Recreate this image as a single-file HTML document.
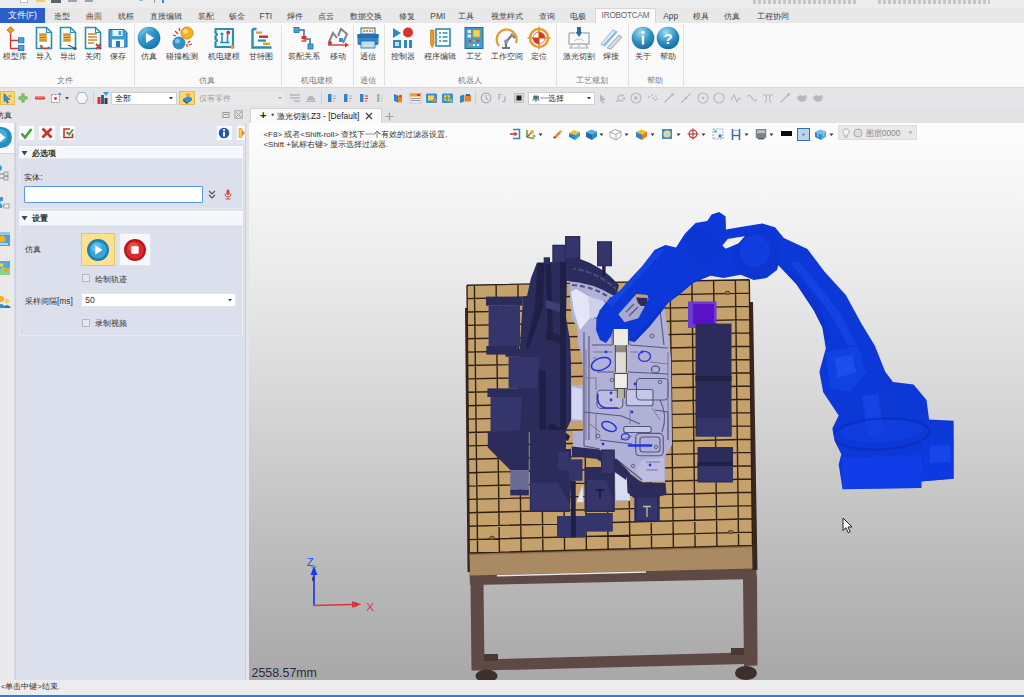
<!DOCTYPE html>
<html>
<head>
<meta charset="utf-8">
<title>IROBOTCAM</title>
<style>
*{box-sizing:border-box;margin:0;padding:0}
html,body{width:1024px;height:697px;overflow:hidden;background:#e5e5e7;font-family:"Liberation Sans",sans-serif;font-size:9px;color:#333}
.abs{position:absolute}
svg{overflow:visible}
#titlebar{left:0;top:0;width:1024px;height:8px;background:#ececec;overflow:hidden}
#tabs{left:0;top:8px;width:1024px;height:15px;background:#e8e8e9}
.tab{position:absolute;top:1px;height:15px;line-height:15px;font-size:8.4px;color:#444;white-space:nowrap;transform:translateX(-50%)}
#filebtn{left:0;top:8px;width:45px;height:14.5px;background:#2b5fc6;color:#fff;font-size:8.6px;line-height:14px;text-align:center;font-style:normal}
#acttab{left:595px;top:7.5px;width:61px;height:16px;background:#fafafa;border:1px solid #d6d6d6;border-bottom:none;font-size:8.2px;line-height:14px;text-align:center;color:#666;letter-spacing:-0.2px}
#ribbon{left:0;top:23px;width:1024px;height:64.5px;background:#fafafa;border-bottom:1px solid #d8d8dc}
.rsep{position:absolute;top:25px;width:1px;height:61px;background:#e0e0e0}
.rlbl{position:absolute;top:50px;height:12px;line-height:12px;font-size:8.4px;color:#3a3a3a;white-space:nowrap;transform:translateX(-50%)}
.glbl{position:absolute;top:74px;height:12px;line-height:12px;font-size:8.4px;color:#7a7a7a;white-space:nowrap;transform:translateX(-50%)}
#toolbar{left:0;top:87.5px;width:1024px;height:20.5px;background:#e5e5e7}
#ptitle{left:-4px;top:108.5px;width:249px;height:15px;font-size:8.4px;line-height:13px;color:#333;white-space:nowrap}
#doctabs{left:249px;top:108px;width:775px;height:15px;background:#e3e3e6}
#viewport{left:248.6px;top:123.4px;width:775.4px;height:556.6px;background:linear-gradient(to bottom,#fdfdfd 0%,#f6f6f6 12%,#e4e4e4 35%,#d2d2d2 55%,#bdbdbd 76%,#a8a8a8 100%);overflow:hidden}
#status{left:0;top:680px;width:1024px;height:15px;background:#ececec;font-size:7.5px;line-height:14px;color:#333;padding-left:1px}
#bluebar{left:0;top:694.7px;width:1024px;height:2.3px;background:#2e7fd2}
</style>
</head>
<body>
<div class="abs" id="titlebar">
<div class="abs" style="left:20.0px;top:0.0px;width:7.5px;height:2.8px;background:#fff;border:1px solid #c4c4c4;border-top:none"></div>
<div class="abs" style="left:35.5px;top:0.0px;width:9.5px;height:2.4px;background:#f0cc62"></div>
<div class="abs" style="left:51.0px;top:0.0px;width:9.5px;height:2.8px;background:#5a6570"></div>
<div class="abs" style="left:68.0px;top:0.0px;width:9.0px;height:2.0px;background:#a0a4aa"></div>
<div class="abs" style="left:85.0px;top:0.0px;width:8.0px;height:2.0px;background:#a0a4aa"></div>
<svg class="abs" style="left:135.5px;top:-3.0px" width="10" height="8" viewBox="0 0 10 8" ><path d="M1,0q4,6 8,0" fill="none" stroke="#3b8fd0" stroke-width="1.4"/></svg>
<div class="abs" style="left:153.5px;top:0.0px;width:1.0px;height:3.0px;background:#999"></div>
<div class="abs" style="left:162.0px;top:0.0px;width:1.5px;height:3.0px;background:#3b8fd0"></div>
<div class="abs" style="left:753.0px;top:0.0px;width:104.0px;height:3.5px;background:repeating-linear-gradient(90deg,#8e8e8e 0 3px,transparent 3px 5px);opacity:.4"></div>
<div class="abs" style="left:878.0px;top:0.0px;width:112.0px;height:3.5px;background:repeating-linear-gradient(90deg,#8e8e8e 0 3px,transparent 3px 5px);opacity:.4"></div>
</div>
<div class="abs" id="tabs">
<span class="tab" style="left:62px">造型</span>
<span class="tab" style="left:94px">曲面</span>
<span class="tab" style="left:125.6px">线框</span>
<span class="tab" style="left:165.6px">直接编辑</span>
<span class="tab" style="left:206px">装配</span>
<span class="tab" style="left:236.9px">钣金</span>
<span class="tab" style="left:265.9px">FTI</span>
<span class="tab" style="left:294.5px">焊件</span>
<span class="tab" style="left:326px">点云</span>
<span class="tab" style="left:365.6px">数据交换</span>
<span class="tab" style="left:406.5px">修复</span>
<span class="tab" style="left:437.8px">PMI</span>
<span class="tab" style="left:466px">工具</span>
<span class="tab" style="left:506.5px">视觉样式</span>
<span class="tab" style="left:547px">查询</span>
<span class="tab" style="left:578.4px">电极</span>
<span class="tab" style="left:670.6px">App</span>
<span class="tab" style="left:701px">模具</span>
<span class="tab" style="left:732px">仿真</span>
<span class="tab" style="left:773px">工程协同</span>
</div>
<div class="abs" id="filebtn">文件(F)</div>
<div class="abs" id="acttab">IROBOTCAM</div>
<div class="abs" id="ribbon"></div>
<svg class="abs" style="left:2.6px;top:26.0px" width="24" height="24" viewBox="0 0 24 24" ><path d="M7.5,7v15.5h8M7.5,14.5h8" stroke="#d9342b" stroke-width="1.3" fill="none"/><rect x="5" y="1.6" width="5" height="5" transform="rotate(45 7.5 4.1)" fill="#e59a2c" stroke="#c77a12" stroke-width="0.8"/><rect x="15.5" y="11.8" width="5.4" height="5" fill="#4aa3d8" stroke="#1f6aa8" stroke-width="0.8"/><rect x="15.5" y="19.6" width="5.4" height="5" fill="#4aa3d8" stroke="#1f6aa8" stroke-width="0.8"/></svg>
<div class="rlbl" style="left:14.6px">模型库</div>
<svg class="abs" style="left:31.5px;top:26.0px" width="24" height="24" viewBox="0 0 24 24" ><path d="M4.5,1.5h10l5,5v16h-15z" fill="#fff" stroke="#2a8fb0" stroke-width="1.6"/><path d="M14.5,1.5v5h5" fill="none" stroke="#2a8fb0" stroke-width="1.2"/><rect x="7" y="7" width="8" height="9" fill="#e9b45a"/><path d="M8,9h6M8,11.5h6M8,14h6" stroke="#b8741a" stroke-width="1"/><path d="M9,21q4,3 9,0" stroke="#d9342b" stroke-width="1.3" fill="none"/><path d="M7.5,19l1.5,3l2,-2.5z" fill="#d9342b"/></svg>
<div class="rlbl" style="left:43.5px">导入</div>
<svg class="abs" style="left:56.4px;top:26.0px" width="24" height="24" viewBox="0 0 24 24" ><path d="M4.5,1.5h10l5,5v16h-15z" fill="#fff" stroke="#2a8fb0" stroke-width="1.6"/><path d="M14.5,1.5v5h5" fill="none" stroke="#2a8fb0" stroke-width="1.2"/><rect x="7" y="7" width="8" height="9" fill="#e9b45a"/><path d="M8,9h6M8,11.5h6M8,14h6" stroke="#b8741a" stroke-width="1"/><path d="M12,19l6,3" stroke="#555" stroke-width="1.3"/><circle cx="19" cy="22.5" r="1.6" fill="#555"/></svg>
<div class="rlbl" style="left:68.4px">导出</div>
<svg class="abs" style="left:81.4px;top:26.0px" width="24" height="24" viewBox="0 0 24 24" ><path d="M4.5,1.5h10l5,5v16h-15z" fill="#fff" stroke="#2a8fb0" stroke-width="1.6"/><path d="M14.5,1.5v5h5" fill="none" stroke="#2a8fb0" stroke-width="1.2"/><path d="M7,8h9M7,11h9M7,14h9M7,17h6" stroke="#d97f2a" stroke-width="1.3"/><path d="M15,18l5,5M20,18l-5,5" stroke="#d9342b" stroke-width="1.8"/></svg>
<div class="rlbl" style="left:93.4px">关闭</div>
<svg class="abs" style="left:106.2px;top:26.0px" width="24" height="24" viewBox="0 0 24 24" ><path d="M3,3.5h15l3,3v14.5h-18z" fill="#3f9ed0" stroke="#1f6aa8" stroke-width="1"/><rect x="6.5" y="4" width="10" height="6" fill="#e8f3fa"/><rect x="12.5" y="5" width="2.6" height="4" fill="#3f9ed0"/><rect x="6" y="13.5" width="12" height="7.5" fill="#f4f9fc"/><rect x="10" y="15" width="4" height="6" fill="#2a78b0"/></svg>
<div class="rlbl" style="left:118.2px">保存</div>
<svg class="abs" style="left:137.4px;top:26.0px" width="24" height="24" viewBox="0 0 24 24" ><defs><radialGradient id="pg" cx="0.35" cy="0.3" r="0.8"><stop offset="0" stop-color="#7fd0ee"/><stop offset="0.6" stop-color="#2390c4"/><stop offset="1" stop-color="#136a9c"/></radialGradient></defs><circle cx="12" cy="12" r="11.3" fill="url(#pg)"/><circle cx="12" cy="12" r="7.5" fill="#1f86bb" opacity="0.5"/><path d="M9,7l8,5l-8,5z" fill="#fff"/></svg>
<div class="rlbl" style="left:149.4px">仿真</div>
<svg class="abs" style="left:170.4px;top:26.0px" width="24" height="24" viewBox="0 0 24 24" ><circle cx="9" cy="17" r="6.5" fill="#2f8fc6"/><circle cx="7.5" cy="15" r="2.5" fill="#8fd0ee" opacity="0.8"/><circle cx="17" cy="7" r="6" fill="#f2b21d" stroke="#e0841a" stroke-width="1"/><circle cx="15.5" cy="5.5" r="2.2" fill="#fbe08a"/><path d="M5,5l3,3M3,9l3,1M9,2l1,3M20,15l-2,2M22,18l-3,1M17,21l0,-3" stroke="#d9342b" stroke-width="1.3"/></svg>
<div class="rlbl" style="left:182.4px">碰撞检测</div>
<svg class="abs" style="left:211.7px;top:26.0px" width="24" height="24" viewBox="0 0 24 24" ><path d="M3.5,3h17.5v18h-17.5v-5q3,-1.5 0,-3v-3q3,-1.5 0,-3z" fill="#f4fafc" stroke="#2a8fb0" stroke-width="2.2" stroke-linejoin="round"/><path d="M10,9.5v6.5M15.5,8v8.5M8,16.5h9.5" fill="none" stroke="#2a8fb0" stroke-width="1.5"/><circle cx="10" cy="8" r="1.5" fill="#2a8fb0"/><circle cx="16.2" cy="6.5" r="1.9" fill="#d9342b"/><circle cx="20.5" cy="21" r="2" fill="#e59a2c"/></svg>
<div class="rlbl" style="left:223.7px">机电建模</div>
<svg class="abs" style="left:249.0px;top:26.0px" width="24" height="24" viewBox="0 0 24 24" ><path d="M3.5,3h4M3.5,3v18.5h19" fill="none" stroke="#2a8fb0" stroke-width="2.4"/><rect x="7" y="5.5" width="6" height="2.2" fill="#e59a2c"/><rect x="10" y="9.5" width="9" height="2.4" fill="#b8322b"/><rect x="9" y="13.5" width="8" height="2.2" fill="#2a8fb0"/><rect x="14" y="16.6" width="7" height="2.4" fill="#e59a2c"/></svg>
<div class="rlbl" style="left:261px">甘特图</div>
<svg class="abs" style="left:292.0px;top:26.0px" width="24" height="24" viewBox="0 0 24 24" ><path d="M6,4h6v9h6v6" fill="none" stroke="#3b6d9a" stroke-width="1.5"/><rect x="2" y="1.5" width="5" height="5" fill="#4aa3d8" stroke="#1f6aa8" stroke-width="0.8"/><rect x="16" y="18" width="5" height="5" fill="#4aa3d8" stroke="#1f6aa8" stroke-width="0.8"/><rect x="9.5" y="10" width="5" height="3" fill="#d9342b"/><rect x="9.5" y="14" width="5" height="2" fill="#c77"/></svg>
<div class="rlbl" style="left:304px">装配关系</div>
<svg class="abs" style="left:325.7px;top:26.0px" width="24" height="24" viewBox="0 0 24 24" ><path d="M3,16l4,-9l4,5M12,10l3,-7l6,5l-4,9" fill="none" stroke="#7a8590" stroke-width="2"/><path d="M2,19h18" stroke="#d9342b" stroke-width="1.4"/><path d="M19,16.5l4,2.5l-4,2.5z" fill="#d9342b"/><rect x="13" y="12" width="4" height="4" fill="#3b8fd0"/><circle cx="4" cy="17" r="2" fill="#d9342b"/></svg>
<div class="rlbl" style="left:337.7px">移动</div>
<svg class="abs" style="left:356.3px;top:26.0px" width="24" height="24" viewBox="0 0 24 24" ><rect x="5" y="2" width="14" height="6" fill="#e9f2f8" stroke="#1f6aa8" stroke-width="1"/><path d="M7,5h10" stroke="#e59a2c" stroke-width="2" stroke-dasharray="2 1"/><rect x="1.5" y="8" width="21" height="11" rx="1.5" fill="#2f86c8"/><rect x="1.5" y="8" width="21" height="4" fill="#2a6fa8"/><rect x="5" y="15" width="14" height="7" fill="#bfe0f2" stroke="#1f6aa8" stroke-width="0.8"/></svg>
<div class="rlbl" style="left:368.3px">通信</div>
<svg class="abs" style="left:391.4px;top:26.0px" width="24" height="24" viewBox="0 0 24 24" ><path d="M2,2l8,5l-8,5z" fill="#2f86c8"/><circle cx="17" cy="6.5" r="5" fill="#d9342b"/><rect x="2" y="14" width="8" height="8" fill="#2f86c8"/><rect x="4" y="16" width="4" height="4" fill="#bfe0f2"/><rect x="13" y="14" width="3" height="8" fill="#2f86c8"/><rect x="18" y="14" width="3" height="8" fill="#2f86c8"/></svg>
<div class="rlbl" style="left:403.4px">控制器</div>
<svg class="abs" style="left:428.3px;top:26.0px" width="24" height="24" viewBox="0 0 24 24" ><rect x="8" y="3" width="14" height="17" fill="#fff" stroke="#2a8fb0" stroke-width="1.6"/><path d="M11,7h2M14.5,7h5M11,11h2M14.5,11h5M11,15h2M14.5,15h5" stroke="#2a8fb0" stroke-width="1.6"/><path d="M2.5,4h3.5v14l-1.75,3.5l-1.75,-3.5z" fill="#e59a2c" stroke="#c77a12" stroke-width="0.7"/></svg>
<div class="rlbl" style="left:440.3px">程序编辑</div>
<svg class="abs" style="left:461.8px;top:26.0px" width="24" height="24" viewBox="0 0 24 24" ><rect x="3" y="1.5" width="18" height="21" fill="#3f9ed0" stroke="#1f6aa8" stroke-width="1"/><rect x="11" y="4" width="7" height="7" fill="#f7d24a" stroke="#c79a12" stroke-width="0.6"/><rect x="5.5" y="4" width="3.5" height="3" fill="#d8ecf6"/><rect x="5.5" y="8.5" width="3.5" height="3" fill="#d8ecf6"/><circle cx="8" cy="15" r="1.3" fill="#d9342b"/><circle cx="12" cy="15" r="1.3" fill="#e59a2c"/><circle cx="16" cy="15" r="1.3" fill="#d9342b"/><circle cx="8" cy="19" r="1.3" fill="#e59a2c"/><circle cx="12" cy="19" r="1.3" fill="#d8ecf6"/><circle cx="16" cy="19" r="1.3" fill="#d8ecf6"/></svg>
<div class="rlbl" style="left:473.8px">工艺</div>
<svg class="abs" style="left:494.6px;top:26.0px" width="24" height="24" viewBox="0 0 24 24" ><path d="M4,20a10,10 0 1 1 17,-3" fill="none" stroke="#e59a2c" stroke-width="2.2"/><path d="M7,22h8M11,22v-6l6,-7l3,3" fill="none" stroke="#6d7782" stroke-width="2.2"/><circle cx="11" cy="15.5" r="2" fill="#8c96a0"/><circle cx="17" cy="9" r="1.8" fill="#8c96a0"/></svg>
<div class="rlbl" style="left:506.6px">工作空间</div>
<svg class="abs" style="left:527.4px;top:26.0px" width="24" height="24" viewBox="0 0 24 24" ><circle cx="12" cy="12" r="9" fill="#fff" stroke="#e59a2c" stroke-width="2.4"/><path d="M12,0.5v23M0.5,12h23" stroke="#e59a2c" stroke-width="1.6"/><path d="M12,12v-6a6,6 0 0 1 6,6z" fill="#d9342b"/><path d="M12,12v6a6,6 0 0 1 -6,-6z" fill="#d9342b"/><circle cx="12" cy="12" r="6" fill="none" stroke="#b55" stroke-width="0.8"/></svg>
<div class="rlbl" style="left:539.4px">定位</div>
<svg class="abs" style="left:567.0px;top:26.0px" width="24" height="24" viewBox="0 0 24 24" ><path d="M2,7h6M16,7h6v11h-20v-11" fill="none" stroke="#a8b0b8" stroke-width="1.3"/><path d="M6,18l-3,4h18l-3,-4" fill="none" stroke="#a8b0b8" stroke-width="1.2"/><rect x="10" y="1" width="4" height="5" fill="#2a6fa8"/><path d="M8.5,6h7l-3.5,5z" fill="#2a6fa8"/><path d="M7,15q5,-4 10,0" fill="none" stroke="#b8c4cc" stroke-width="1"/><text x="12" y="21" font-size="4" text-anchor="middle" fill="#9aa" font-family="Liberation Sans">∠</text></svg>
<div class="rlbl" style="left:579px">激光切割</div>
<svg class="abs" style="left:599.0px;top:26.0px" width="24" height="24" viewBox="0 0 24 24" ><path d="M2,18l12,-14l4,2l-12,14z" fill="#e2eef6" stroke="#9ec4de" stroke-width="1.1"/><path d="M8,22l12,-13l3,2l-11,12z" fill="#d0dde6" stroke="#9aa8b4" stroke-width="1"/><path d="M5,19l12,-13" stroke="#6fb2dc" stroke-width="1.2"/></svg>
<div class="rlbl" style="left:611px">焊接</div>
<svg class="abs" style="left:630.5px;top:26.0px" width="24" height="24" viewBox="0 0 24 24" ><defs><radialGradient id="ig" cx="0.4" cy="0.25" r="0.85"><stop offset="0" stop-color="#9fdcf2"/><stop offset="0.55" stop-color="#2a8fc2"/><stop offset="1" stop-color="#14628f"/></radialGradient></defs><circle cx="12" cy="12" r="11.3" fill="url(#ig)"/><rect x="10.8" y="9.5" width="2.4" height="9" fill="#fff"/><circle cx="12" cy="6.3" r="1.6" fill="#fff"/></svg>
<div class="rlbl" style="left:642.5px">关于</div>
<svg class="abs" style="left:656.0px;top:26.0px" width="24" height="24" viewBox="0 0 24 24" ><circle cx="12" cy="12" r="11.3" fill="url(#ig)"/><text x="12" y="17.5" font-size="15" font-weight="bold" text-anchor="middle" fill="#fff" font-family="Liberation Sans">?</text></svg>
<div class="rlbl" style="left:668px">帮助</div>
<div class="glbl" style="left:64.5px">文件</div>
<div class="glbl" style="left:207px">仿真</div>
<div class="glbl" style="left:316.8px">机电建模</div>
<div class="glbl" style="left:368.3px">通信</div>
<div class="glbl" style="left:470px">机器人</div>
<div class="glbl" style="left:591.6px">工艺规划</div>
<div class="glbl" style="left:655px">帮助</div>
<div class="rsep" style="left:134.2px"></div>
<div class="rsep" style="left:281px"></div>
<div class="rsep" style="left:353px"></div>
<div class="rsep" style="left:383.8px"></div>
<div class="rsep" style="left:555.6px"></div>
<div class="rsep" style="left:627.8px"></div>
<div class="rsep" style="left:683px"></div>
<div class="abs" id="toolbar"></div>
<div class="abs" style="left:0.0px;top:91.3px;width:15.2px;height:13.3px;background:#f7d978;border:1px solid #e2bd55"></div>
<svg class="abs" style="left:1.0px;top:92.0px" width="12" height="12" viewBox="0 0 12 12" ><path d="M3,1.5l6,6h-3l1.5,3l-1.5,.8l-1.5,-3l-1.5,1.5z" fill="#3b8fd0" stroke="#1f5f98" stroke-width="0.5"/><circle cx="9" cy="4" r="1.6" fill="#f2a21d"/></svg>
<svg class="abs" style="left:17.4px;top:92.0px" width="12" height="12" viewBox="0 0 12 12" ><path d="M6,1.5v9M1.5,6h9" stroke="#5aa83c" stroke-width="3"/><path d="M6,1.5v9M1.5,6h9" stroke="#9bd47a" stroke-width="1"/></svg>
<svg class="abs" style="left:34.0px;top:92.0px" width="12" height="12" viewBox="0 0 12 12" ><rect x="1" y="4.5" width="10" height="3" rx="1" fill="#d9342b"/><rect x="2" y="5.2" width="8" height="1" fill="#f08a80"/></svg>
<svg class="abs" style="left:50.3px;top:92.0px" width="12" height="12" viewBox="0 0 12 12" ><rect x="1.5" y="2.5" width="8" height="8" fill="#fff" stroke="#8a929a" stroke-width="1" stroke-dasharray="2 1"/><circle cx="5.5" cy="6.5" r="1.4" fill="#d9342b"/><path d="M9,1l2,2" stroke="#3b8fd0" stroke-width="1.4"/></svg>
<svg class="abs" style="left:64.4px;top:95.0px" width="6" height="6" viewBox="0 0 6 6" ><path d="M1,2h4l-2,2.5z" fill="#444"/></svg>
<svg class="abs" style="left:74.5px;top:91.0px" width="14" height="14" viewBox="0 0 14 14" ><path d="M4,1.5h6l3,5.5l-3,5.5h-6l-3,-5.5z" fill="#f4f7fa" stroke="#9db4c8" stroke-width="1"/></svg>
<div class="abs" style="left:93.0px;top:91.0px;width:1.0px;height:14.0px;background:#cfcfcf"></div>
<svg class="abs" style="left:95.5px;top:91.0px" width="14" height="14" viewBox="0 0 14 14" ><rect x="1.5" y="6" width="3" height="7" fill="#d9342b"/><rect x="5" y="4" width="3" height="9" fill="#2a5fa8"/><rect x="8.5" y="7" width="3" height="6" fill="#3a3a3a"/><path d="M7,1h6l-3,4z" fill="#2f9fd8"/></svg>
<div class="abs" style="left:111.3px;top:92.0px;width:65.4px;height:12.6px;background:#fff;border:1px solid #d0d0d0;font-size:8.4px;line-height:11px;padding-left:3px;color:#222">全部</div>
<svg class="abs" style="left:168.0px;top:95.0px" width="6" height="6" viewBox="0 0 6 6" ><path d="M1,2h4l-2,2.5z" fill="#333"/></svg>
<div class="abs" style="left:178.7px;top:91.3px;width:16.1px;height:13.3px;background:#f7d978;border:1px solid #e2bd55"></div>
<svg class="abs" style="left:180.7px;top:92.0px" width="12" height="12" viewBox="0 0 12 12" ><path d="M2,7l5,-3l4,2l-5,4z" fill="#3b8fd0"/><path d="M2,7v2l4,3v-2z" fill="#1f5f98"/><path d="M6,10v2l5,-4v-2z" fill="#2a78b8"/><path d="M4,3l3,-2l3,1.5l-3,2z" fill="#f2a21d"/></svg>
<div class="abs" style="left:195.7px;top:92.0px;width:88.5px;height:12.6px;background:#e9e9e9;font-size:8.4px;line-height:12px;padding-left:3px;color:#9a9a9a">仅有零件</div>
<svg class="abs" style="left:277.4px;top:95.0px" width="6" height="6" viewBox="0 0 6 6" ><path d="M1,2h4l-2,2.5z" fill="#aaa"/></svg>
<svg class="abs" style="left:289.3px;top:92.0px" width="12" height="12" viewBox="0 0 12 12" ><path d="M1,3h10M1,6h10M5,9h6" stroke="#b4b8bc" stroke-width="1.3"/></svg>
<svg class="abs" style="left:305.4px;top:92.0px" width="12" height="12" viewBox="0 0 12 12" ><path d="M2,8q4,-8 8,0zM1,9.5h10" fill="#b4b8bc" stroke="#b4b8bc" stroke-width="1"/></svg>
<div class="abs" style="left:321.3px;top:91.0px;width:1.0px;height:14.0px;background:#cfcfcf"></div>
<svg class="abs" style="left:325.9px;top:92.0px" width="12" height="12" viewBox="0 0 12 12" ><rect x="2" y="2" width="3.5" height="8" fill="#2f86c8"/><path d="M7,4h3M7,6.5h3M7,9h2" stroke="#a9b0b8" stroke-width="1.1"/></svg>
<svg class="abs" style="left:342.0px;top:92.0px" width="12" height="12" viewBox="0 0 12 12" ><rect x="2" y="2" width="3.5" height="8" fill="#2f86c8"/><path d="M7,4h3M7,6.5h3M7,9h2" stroke="#a9b0b8" stroke-width="1.1"/></svg>
<svg class="abs" style="left:357.5px;top:92.0px" width="12" height="12" viewBox="0 0 12 12" ><rect x="2" y="2" width="3.5" height="8" fill="#2f86c8"/><path d="M7,4h3M7,6.5h3M7,9h2" stroke="#d9342b" stroke-width="1.1"/></svg>
<svg class="abs" style="left:374.2px;top:92.0px" width="12" height="12" viewBox="0 0 12 12" ><rect x="3" y="2" width="2.5" height="8" fill="#a9b0b8"/><path d="M7,4h2M7,6.5h2M7,9h2" stroke="#b9bec4" stroke-width="1.1"/></svg>
<svg class="abs" style="left:391.8px;top:92.0px" width="12" height="12" viewBox="0 0 12 12" ><path d="M2,2l4,1.5v7l-4,-1.5z" fill="#2f86c8"/><path d="M6,3.5l4,1v6l-4,0z" fill="#e5822c"/><circle cx="8.5" cy="4" r="1.3" fill="#d9342b"/></svg>
<svg class="abs" style="left:408.9px;top:92.0px" width="13" height="12" viewBox="0 0 13 12" ><rect x="1" y="1.5" width="11" height="9.5" fill="#f3f3f3" stroke="#aab" stroke-width="0.6"/><rect x="1" y="1.5" width="11" height="3" fill="#e5a23c"/><path d="M2,6.5h9M2,8.5h9" stroke="#888" stroke-width="0.9"/><rect x="8" y="2" width="3" height="2" fill="#d9342b"/></svg>
<svg class="abs" style="left:425.0px;top:92.0px" width="13" height="12" viewBox="0 0 13 12" ><rect x="1" y="1.5" width="11" height="9.5" rx="1" fill="#3b8fd0"/><rect x="3" y="3.5" width="6" height="5" fill="#f7d24a"/><circle cx="9.5" cy="8.5" r="2" fill="#e5822c"/></svg>
<svg class="abs" style="left:441.1px;top:92.0px" width="13" height="12" viewBox="0 0 13 12" ><rect x="1" y="1.5" width="11" height="9.5" rx="1" fill="#3b8fd0"/><circle cx="6" cy="6" r="3.2" fill="#f7d24a"/><path d="M6,3v6M3,6h6" stroke="#3a9a4a" stroke-width="1.2"/><rect x="8" y="7" width="3.5" height="3.5" fill="#7cc46a"/></svg>
<svg class="abs" style="left:458.7px;top:92.0px" width="13" height="12" viewBox="0 0 13 12" ><path d="M1,4l4,-1.5v7l-4,1.5z" fill="#2f86c8"/><rect x="5.5" y="3" width="6.5" height="6.5" fill="#e5822c"/><rect x="7" y="2" width="4" height="2" fill="#3b6fa8"/></svg>
<div class="abs" style="left:475.0px;top:91.0px;width:1.0px;height:14.0px;background:#cfcfcf"></div>
<svg class="abs" style="left:480.3px;top:92.0px" width="12" height="12" viewBox="0 0 12 12" ><circle cx="6" cy="6" r="4.8" fill="none" stroke="#a9adb3" stroke-width="1.2"/><path d="M6,3v3.2l2,1.5" fill="none" stroke="#a9adb3" stroke-width="1.1"/></svg>
<svg class="abs" style="left:495.8px;top:92.0px" width="12" height="12" viewBox="0 0 12 12" ><path d="M3,2.5h2.5M3,2.5v5M9,4.5v5M9,9.5h-2.5" fill="none" stroke="#a9adb3" stroke-width="1.2"/></svg>
<svg class="abs" style="left:512.5px;top:92.0px" width="12" height="12" viewBox="0 0 12 12" ><rect x="1.5" y="1.5" width="9" height="9" fill="#dadada" stroke="#b8b8b8" stroke-width="0.8"/><rect x="3.5" y="3.5" width="5" height="5" fill="#222"/></svg>
<div class="abs" style="left:528.2px;top:92.0px;width:66.6px;height:12.6px;background:#fff;border:1px solid #d0d0d0;font-size:8.4px;line-height:11px;padding-left:3px;color:#222">单一选择</div>
<svg class="abs" style="left:585.8px;top:95.0px" width="6" height="6" viewBox="0 0 6 6" ><path d="M1,2h4l-2,2.5z" fill="#333"/></svg>
<svg class="abs" style="left:596.0px;top:92.0px" width="12" height="12" viewBox="0 0 12 12" ><path d="M4,2l6,6h-3l1.5,3l-1.5,.8l-1.5,-3l-1.5,1.5z" fill="#b6babf"/></svg>
<svg class="abs" style="left:613.6px;top:92.0px" width="12" height="12" viewBox="0 0 12 12" ><circle cx="7" cy="6" r="3" fill="none" stroke="#b6babf" stroke-width="2" stroke-dasharray="1.5 1"/><path d="M2,10l3,-2" stroke="#b6babf" stroke-width="1.5"/></svg>
<svg class="abs" style="left:630.3px;top:92.0px" width="12" height="12" viewBox="0 0 12 12" ><circle cx="6" cy="6" r="5" fill="none" stroke="#b6babf" stroke-width="1.2"/><path d="M4.5,3.5l4,2.5l-4,2.5z" fill="#b6babf"/></svg>
<svg class="abs" style="left:646.7px;top:92.0px" width="12" height="12" viewBox="0 0 12 12" ><circle cx="2" cy="5" r="0.9" fill="#b6babf"/><circle cx="5" cy="3" r="0.9" fill="#b6babf"/><circle cx="6" cy="6" r="0.9" fill="#b6babf"/><circle cx="9" cy="4" r="0.9" fill="#b6babf"/><circle cx="8" cy="8" r="0.9" fill="#b6babf"/><circle cx="10" cy="7" r="0.9" fill="#b6babf"/></svg>
<svg class="abs" style="left:663.4px;top:92.0px" width="12" height="12" viewBox="0 0 12 12" ><path d="M1.5,10.5l9,-9" stroke="#b6babf" stroke-width="1.2"/><circle cx="9.5" cy="2.5" r="1.2" fill="#b6babf"/></svg>
<svg class="abs" style="left:680.0px;top:92.0px" width="12" height="12" viewBox="0 0 12 12" ><path d="M1.5,10.5l9,-9" stroke="#b6babf" stroke-width="1.2"/><circle cx="6" cy="6" r="1.2" fill="#b6babf"/></svg>
<svg class="abs" style="left:696.5px;top:92.0px" width="12" height="12" viewBox="0 0 12 12" ><circle cx="6" cy="6" r="5" fill="none" stroke="#b6babf" stroke-width="1.1"/><circle cx="6" cy="6" r="1.2" fill="#b6babf"/></svg>
<svg class="abs" style="left:713.2px;top:92.0px" width="12" height="12" viewBox="0 0 12 12" ><circle cx="6" cy="6" r="5" fill="none" stroke="#b6babf" stroke-width="1.2"/></svg>
<svg class="abs" style="left:729.9px;top:92.0px" width="12" height="12" viewBox="0 0 12 12" ><path d="M1,8l3,-5l3,7l2,-4l2,1" fill="none" stroke="#b6babf" stroke-width="1.1"/></svg>
<svg class="abs" style="left:746.3px;top:92.0px" width="12" height="12" viewBox="0 0 12 12" ><path d="M1,5q2.5,-4 5,1t5,1" fill="none" stroke="#b6babf" stroke-width="1.2"/></svg>
<svg class="abs" style="left:762.4px;top:92.0px" width="12" height="12" viewBox="0 0 12 12" ><path d="M1,3h10M3,4q3,0 0,7M9,4q-3,0 0,7" fill="none" stroke="#b6babf" stroke-width="1.1"/></svg>
<svg class="abs" style="left:779.1px;top:92.0px" width="12" height="12" viewBox="0 0 12 12" ><path d="M1.5,10.5l9,-9" stroke="#b6babf" stroke-width="1.2"/><circle cx="9.5" cy="2.5" r="1.2" fill="#b6babf"/></svg>
<svg class="abs" style="left:795.8px;top:92.0px" width="12" height="12" viewBox="0 0 12 12" ><path d="M1,5l3,-2l3,1l3,-1l1,3l-2,3l-4,1l-3,-2z" fill="#b6babf"/></svg>
<svg class="abs" style="left:812.2px;top:92.0px" width="12" height="12" viewBox="0 0 12 12" ><path d="M1,5l3,-2l3,1l3,-1l1,3l-2,3l-4,1l-3,-2z" fill="#b6babf"/></svg>
<div class="abs" id="ptitle">仿真</div>
<div class="abs" id="doctabs"></div>
<div class="abs" style="left:250.0px;top:108.0px;width:131.7px;height:15.5px;background:#fafafa;border:1px solid #d4d4d8;border-bottom:none;font-size:8.4px;line-height:14px;color:#222;white-space:nowrap;padding-left:9px"><b style="font-size:11px;line-height:12px">+</b>&nbsp; * 激光切割.Z3 - [Default]</div>
<svg class="abs" style="left:364.5px;top:112.0px" width="8" height="8" viewBox="0 0 8 8" ><path d="M1,1l6,6M7,1l-6,6" stroke="#444" stroke-width="1.3"/></svg>
<svg class="abs" style="left:385.1px;top:111.5px" width="9" height="9" viewBox="0 0 9 9" ><path d="M4.5,0.5v8M0.5,4.5h8" stroke="#a0a0a0" stroke-width="1.2"/></svg>
<svg class="abs" style="left:221.6px;top:110.5px" width="8" height="8" viewBox="0 0 8 8" ><rect x="1" y="1.5" width="6" height="5" fill="none" stroke="#9a9a9a" stroke-width="1"/><path d="M2,3.5h4" stroke="#9a9a9a" stroke-width="1"/></svg>
<svg class="abs" style="left:234.3px;top:110.0px" width="9" height="9" viewBox="0 0 9 9" ><rect x="0.8" y="0.8" width="7.4" height="7.4" fill="none" stroke="#9a9a9a" stroke-width="0.9"/><path d="M2,2l5,5M7,2l-5,5" stroke="#9a9a9a" stroke-width="1"/></svg>
<div class="abs" style="left:0.0px;top:123.0px;width:15.0px;height:557.5px;background:#e9e9eb;border-right:1px solid #d9dbe4;overflow:hidden"><div class="abs" style="left:0;top:0;width:15px;height:31px;background:#fbfbfd;border-bottom:1px solid #d5d8e2"></div></div>
<svg class="abs" style="left:0;top:126px" width="14" height="24" viewBox="0 0 14 24"><circle cx="1.5" cy="11.5" r="10.5" fill="#2390c4"/><circle cx="0.5" cy="10" r="7" fill="#55b6e0" opacity="0.7"/><path d="M0,7l5.5,4.5l-5.5,4.5z" fill="#fff"/></svg>
<svg class="abs" style="left:-3.0px;top:164.7px" width="14" height="16" viewBox="0 0 14 16" ><circle cx="2" cy="3" r="3" fill="#3b9ad8"/><path d="M2,6v7h5M2,9h5" fill="none" stroke="#7a8590" stroke-width="1"/><rect x="7" y="7" width="4" height="3.5" fill="#dfe6ee" stroke="#7a8590" stroke-width="0.7"/><rect x="7" y="11.5" width="4" height="3.5" fill="#dfe6ee" stroke="#7a8590" stroke-width="0.7"/></svg>
<svg class="abs" style="left:-3.0px;top:196.0px" width="14" height="14" viewBox="0 0 14 14" ><rect x="0" y="1" width="6" height="4" fill="#3b9ad8"/><rect x="0" y="8" width="5" height="4" fill="#3b9ad8"/><rect x="7" y="8" width="5" height="4" fill="#eef3f8" stroke="#7a8590" stroke-width="0.7"/><path d="M3,5v3M5,10h2" stroke="#7a8590" stroke-width="0.9"/></svg>
<svg class="abs" style="left:-2.0px;top:230.5px" width="14" height="16" viewBox="0 0 14 16" ><rect x="0" y="1" width="12" height="14" fill="#4aa3d8"/><rect x="0" y="1" width="12" height="3" fill="#8fc8ea"/><circle cx="4" cy="8" r="3.5" fill="#f2b21d"/><path d="M1,13h9" stroke="#e8f3fa" stroke-width="1.2"/></svg>
<svg class="abs" style="left:-2.0px;top:260.0px" width="14" height="16" viewBox="0 0 14 16" ><rect x="0" y="1" width="12" height="14" fill="#55a8dc"/><path d="M0,12l5,-6l4,4l3,-3v8h-12z" fill="#8fd08a"/><circle cx="3.5" cy="5" r="1.8" fill="#f7d24a"/><circle cx="8" cy="10" r="2.2" fill="#f2a21d"/></svg>
<svg class="abs" style="left:-2.0px;top:294.5px" width="14" height="14" viewBox="0 0 14 14" ><circle cx="3" cy="4" r="3" fill="#f2b21d"/><path d="M-2,13q5,-8 10,0z" fill="#3b8fd0"/><circle cx="9" cy="6" r="2.3" fill="#f7d24a"/><path d="M5,13q4,-6 8,0z" fill="#2f76b8"/></svg>
<div class="abs" style="left:15.0px;top:123.0px;width:231.0px;height:557.5px;background:#dcdfec;border:1px solid #cdd1de;border-top:none"></div>
<div class="abs" style="left:16.0px;top:123.0px;width:229.0px;height:21.0px;background:#e3e5ee"></div>
<div class="abs" style="left:17.7px;top:125.2px;width:17.3px;height:15.6px;background:#fafbfd;border:1px solid #e3e5ec"></div>
<svg class="abs" style="left:19.8px;top:127.0px" width="13" height="12" viewBox="0 0 13 12" ><path d="M1.5,6.5l3.5,4l6.5,-8.5" fill="none" stroke="#3fa33a" stroke-width="2.6"/></svg>
<div class="abs" style="left:38.2px;top:125.2px;width:17.4px;height:15.6px;background:#fafbfd;border:1px solid #e3e5ec"></div>
<svg class="abs" style="left:40.9px;top:127.0px" width="12" height="12" viewBox="0 0 12 12" ><path d="M1.5,1.5l9,9M10.5,1.5l-9,9" stroke="#cf2f2a" stroke-width="2.8"/></svg>
<div class="abs" style="left:59.3px;top:125.2px;width:17.2px;height:15.6px;background:#fafbfd;border:1px solid #e3e5ec"></div>
<svg class="abs" style="left:61.9px;top:127.0px" width="12" height="12" viewBox="0 0 12 12" ><path d="M8,2h-6v8.5h8.5v-4" fill="none" stroke="#cf2f2a" stroke-width="1.6"/><path d="M4.5,5l2.5,2.5l4,-5" fill="none" stroke="#3fa33a" stroke-width="2"/></svg>
<div class="abs" style="left:215.7px;top:125.2px;width:17.5px;height:15.6px;background:#fafbfd;border:1px solid #e3e5ec"></div>
<svg class="abs" style="left:218.4px;top:127.0px" width="12" height="12" viewBox="0 0 12 12" ><circle cx="6" cy="6" r="5.3" fill="#2456b8"/><rect x="5" y="5" width="2" height="4.5" fill="#fff"/><circle cx="6" cy="3.2" r="1.1" fill="#fff"/></svg>
<div class="abs" style="left:235.8px;top:125.2px;width:9.2px;height:15.6px;background:#fafbfd;border:1px solid #e3e5ec;border-right:none"></div>
<svg class="abs" style="left:238.0px;top:127.0px" width="7" height="12" viewBox="0 0 7 12" ><path d="M1,1.5h3v9h-3z" fill="#f7d24a" stroke="#c79a12" stroke-width="0.6"/><path d="M4,3l3,3l-3,3z" fill="#e5822c"/></svg>
<div class="abs" style="left:18.7px;top:145.7px;width:224.3px;height:13.6px;background:#f6f7fb;border-top:1px solid #fff;border-bottom:1px solid #e6e8f0;font-size:8.4px;font-weight:bold;line-height:13px;color:#333;padding-left:13px">必选项</div>
<svg class="abs" style="left:20.8px;top:149.5px" width="7" height="6" viewBox="0 0 7 6" ><path d="M0.5,1h6l-3,4.5z" fill="#444"/></svg>
<div class="abs" style="left:18.7px;top:159.3px;width:224.3px;height:49.7px;border:1px solid #e9ebf3;border-top:none"></div>
<div class="abs" style="left:24.3px;top:171.0px;width:35.7px;height:12.0px;font-size:8.4px;line-height:12px;color:#333">实体:</div>
<div class="abs" style="left:23.9px;top:185.8px;width:179.5px;height:16.8px;background:#fff;border:1.4px solid #5b9bdc;border-radius:1px"></div>
<svg class="abs" style="left:207.6px;top:189.8px" width="8" height="9" viewBox="0 0 8 9" ><path d="M1,1l3,3l3,-3M1,5l3,3l3,-3" fill="none" stroke="#555" stroke-width="1.2"/></svg>
<svg class="abs" style="left:223.6px;top:188.8px" width="8" height="11" viewBox="0 0 8 11" ><rect x="2.5" y="0.5" width="3" height="5.5" rx="1.5" fill="#d9453b"/><path d="M1,4.5q0,3.5 3,3.5t3,-3.5M4,8v1.5M1.5,10h5" fill="none" stroke="#c4423a" stroke-width="0.9"/></svg>
<div class="abs" style="left:18.7px;top:211.0px;width:224.3px;height:14.5px;background:#f6f7fb;border-top:1px solid #fff;border-bottom:1px solid #e6e8f0;font-size:8.4px;font-weight:bold;line-height:13px;color:#333;padding-left:13px">设置</div>
<svg class="abs" style="left:20.8px;top:215.0px" width="7" height="6" viewBox="0 0 7 6" ><path d="M0.5,1h6l-3,4.5z" fill="#444"/></svg>
<div class="abs" style="left:18.7px;top:225.5px;width:224.3px;height:110.5px;border:1px solid #e9ebf3;border-top:none"></div>
<div class="abs" style="left:25.0px;top:243.0px;width:35.0px;height:13.0px;font-size:8.4px;line-height:12px;color:#333">仿真</div>
<div class="abs" style="left:81.3px;top:233.0px;width:33.3px;height:33.0px;background:#fbe28e;border:1px solid #e6c565"></div>
<svg class="abs" style="left:86.0px;top:237.5px" width="24" height="24" viewBox="0 0 24 24" ><circle cx="12" cy="12" r="11" fill="#1f7fb4"/><circle cx="12" cy="12" r="8.6" fill="#3aa4d8"/><circle cx="10.5" cy="9.5" r="5" fill="#7ccbee" opacity="0.6"/><path d="M9.3,7.2l7,4.8l-7,4.8z" fill="#fff"/></svg>
<div class="abs" style="left:119.4px;top:233.0px;width:31.6px;height:33.0px;background:#f7f8fb;border:1px solid #e4e6ee"></div>
<svg class="abs" style="left:123.2px;top:237.5px" width="24" height="24" viewBox="0 0 24 24" ><circle cx="12" cy="12" r="11" fill="#b8151b"/><circle cx="12" cy="12" r="8.8" fill="#dc2a2e"/><circle cx="10.5" cy="9.5" r="5" fill="#f06a66" opacity="0.55"/><rect x="8.3" y="8.3" width="7.4" height="7.4" rx="1" fill="#fff"/></svg>
<div class="abs" style="left:82.0px;top:274.2px;width:8.3px;height:8.3px;background:#e6e8ee;border:1px solid #b4b8c4"></div>
<div class="abs" style="left:95.0px;top:272.5px;width:45.0px;height:12.0px;font-size:8.4px;line-height:12px;color:#333">绘制轨迹</div>
<div class="abs" style="left:25.0px;top:294.7px;width:57.0px;height:12.3px;font-size:8.4px;line-height:12px;color:#333;white-space:nowrap">采样间隔[ms]</div>
<div class="abs" style="left:81.3px;top:293.2px;width:154.5px;height:13.8px;background:#fff;border:1px solid #e2e4ec;font-size:8.5px;line-height:12px;padding-left:3px;color:#333">50</div>
<svg class="abs" style="left:227.0px;top:297.3px" width="6" height="6" viewBox="0 0 6 6" ><path d="M1,2h4l-2,2.5z" fill="#444"/></svg>
<div class="abs" style="left:82.0px;top:318.5px;width:8.3px;height:8.3px;background:#e6e8ee;border:1px solid #b4b8c4"></div>
<div class="abs" style="left:95.0px;top:316.7px;width:45.0px;height:12.0px;font-size:8.4px;line-height:12px;color:#333">录制视频</div>
<div class="abs" id="viewport">
<div class="abs" style="left:-248.6px;top:-123.4px;width:1024px;height:697px">
<svg class="abs" style="left:249px;top:123px" width="775" height="557" viewBox="249 123 775 557">
<polygon points="469.5,572.0 756.0,566.0 757.0,579.0 470.0,585.0" fill="#5e4945" />
<polygon points="470.5,584.0 483.5,584.0 484.5,670.5 471.5,670.5" fill="#5e4945" />
<polygon points="743.0,578.0 757.0,577.0 757.5,665.5 744.0,666.0" fill="#5e4945" />
<polygon points="483.0,659.5 744.0,652.5 744.0,664.0 483.0,670.5" fill="#5e4945" />
<rect x="484.0" y="654.0" width="14.0" height="7.0" fill="#4a3834" />
<rect x="731.0" y="648.0" width="13.0" height="7.0" fill="#4a3834" />
<ellipse cx="486.5" cy="676" rx="11" ry="6.5" fill="#3d2f2c"/>
<ellipse cx="746" cy="673" rx="11" ry="7" fill="#3d2f2c"/>
<polygon points="465.0,308.0 469.0,308.0 471.0,572.0 467.5,572.0" fill="#3a2620" />
<polygon points="749.0,302.0 753.0,302.0 757.5,570.0 752.0,570.0" fill="#3a2620" />
<polygon points="469.5,553.0 752.0,545.5 752.5,568.5 470.0,575.5" fill="#a98a62" />
<polygon points="469.5,553.0 752.0,545.5 752.0,547.5 469.5,555.0" fill="#8c6f4c" />
<polygon points="497.0,575.0 646.0,571.3 646.0,572.8 497.0,576.5" fill="#e8e8ee" />
<polygon points="467.0,285.2 749.3,279.8 752.5,545.4 469.2,553.0" fill="#c5a26b" />
<path d="M474.4,285.1L477.6,552.8M496.1,284.6L499.4,552.2M517.9,284.2L521.1,551.6M539.6,283.8L542.9,551.0M561.4,283.4L564.6,550.4M583.1,283.0L586.4,549.9M604.9,282.6L608.1,549.3M626.6,282.1L629.9,548.7M648.4,281.7L651.6,548.1M670.1,281.3L673.4,547.5M691.9,280.9L695.1,546.9M713.6,280.5L716.9,546.4M735.4,280.1L738.6,545.8M467.0,285.2L749.3,279.8M467.1,298.6L749.5,293.1M467.2,312.0L749.6,306.4M467.3,325.4L749.8,319.6M467.4,338.8L749.9,332.9M467.6,352.1L750.1,346.2M467.7,365.5L750.3,359.5M467.8,378.9L750.4,372.8M467.9,392.3L750.6,386.0M468.0,405.7L750.7,399.3M468.1,419.1L750.9,412.6M468.2,432.5L751.1,425.9M468.3,445.9L751.2,439.2M468.4,459.3L751.4,452.4M468.5,472.7L751.5,465.7M468.6,486.1L751.7,479.0M468.8,499.4L751.9,492.3M468.9,512.8L752.0,505.6M469.0,526.2L752.2,518.8M469.1,539.6L752.3,532.1M469.2,553.0L752.5,545.4M467.0,285.2L469.2,553.0M749.3,279.8L752.5,545.4" stroke="#2f2016" stroke-width="1.4" fill="none"/>
<ellipse cx="492" cy="537.8" rx="2.6" ry="1.6" fill="#8a6f48" stroke="#4a3826" stroke-width="0.8"/>
<ellipse cx="730.7" cy="532" rx="2.6" ry="1.6" fill="#8a6f48" stroke="#4a3826" stroke-width="0.8"/>
<ellipse cx="727.5" cy="292.9" rx="2.6" ry="1.6" fill="#8a6f48" stroke="#4a3826" stroke-width="0.8"/>
<rect x="688.0" y="301.5" width="28.5" height="26.5" fill="#6a3bd0" />
<rect x="693.0" y="304.0" width="21.0" height="20.0" fill="#5a12c9" />
<rect x="695.5" y="323.6" width="36.0" height="112.9" fill="#2b2c5b" />
<rect x="695.5" y="376.0" width="36.0" height="5.0" fill="#202146" />
<rect x="697.0" y="418.0" width="34.5" height="18.5" fill="#33346a" />
<rect x="697.5" y="447.0" width="35.5" height="35.5" fill="#2b2c5b" />
<rect x="697.5" y="462.0" width="35.5" height="4.0" fill="#202146" />
<rect x="698.5" y="466.0" width="34.5" height="15.0" fill="#33346a" />
<polygon points="570.0,279.0 590.0,282.0 610.0,288.0 617.0,294.0 640.0,300.0 664.0,306.0 668.0,330.0 671.0,358.0 672.0,445.0 665.0,456.0 665.0,482.0 642.0,482.0 628.4,471.0 630.0,501.0 615.0,501.0 614.8,473.0 616.7,459.3 599.0,449.5 572.8,446.6 572.8,431.0 583.0,431.0 583.0,421.0 571.0,421.0 571.0,385.0 583.0,385.0 584.0,400.0 582.0,356.0 578.0,344.0 577.0,326.0 572.0,320.0 570.0,300.0" fill="#b1b1d8" />
<polygon points="571.0,292.0 576.0,289.0 588.0,296.0 600.0,303.0 590.0,318.0 580.0,330.0 574.0,312.0" fill="#e3e6f6" />
<polygon points="588.0,296.0 615.0,305.0 612.0,320.0 590.0,318.0" fill="#cfd1ec" />
<polygon points="572.0,387.0 582.0,389.0 582.0,420.0 572.0,419.0" fill="#d3d6ee" />
<polygon points="615.0,474.0 629.0,474.0 630.0,500.0 616.0,500.0" fill="#d9dbf0" />
<rect x="626.3" y="389.5" width="26.7" height="16.3" rx="2" fill="#c6c6e5" stroke="#55557e" stroke-width="1.1"/>
<rect x="636.4" y="378.5" width="31.6" height="21.5" rx="4" fill="none" stroke="#55557e" stroke-width="1.1"/>
<rect x="597.0" y="390.3" width="25.8" height="18.1" rx="4" fill="#bcbce0" stroke="#55557e" stroke-width="1.1"/>
<rect x="623.7" y="426.5" width="27.5" height="6.0" rx="2" fill="#c6c6e5" stroke="#55557e" stroke-width="1.1"/>
<rect x="635.7" y="433.4" width="27.6" height="22.3" rx="4" fill="none" stroke="#55557e" stroke-width="1.1"/>
<rect x="640.0" y="437.0" width="20.0" height="15.0" rx="3" fill="none" stroke="#55557e" stroke-width="1.1"/>
<polygon points="642.0,460.0 664.0,458.0 664.0,481.0 643.0,481.0 636.0,470.0" fill="#bdbde0" />
<path d="M584,332 L584,446 M589,336 L589,440 M592,345 L612,345 M630,345 L668,348 M584,412 L622,416 L640,424 M597,372 L614,372 M628,372 L668,374 M660,310 L664,345 M655,410 L668,412 L668,440 M600,440 L632,444 M594,318 L640,322 M600,310 L600,330 M640,306 L640,322 M584,446 L600,449 M616,459 L642,480 M660,400 Q668,415 662,432" fill="none" stroke="#55557e" stroke-width="1.1"/>
<path d="M593,352 L612,352 M593,358 L596,358 M630,352 L638,352 M650,362 L668,364 M586,378 L596,378 M596,378 L596,390 M630,410 L630,424 M652,408 L660,420 M596,414 L596,440 M646,462 L660,462 M646,470 L658,470 M604,300 L610,312 M620,304 L624,318 M632,308 L634,322 M586,350 L586,440 M668,352 L668,440 M612,330 L612,345 M630,330 L630,345 M590,424 L600,432 M620,440 L632,436" fill="none" stroke="#6e6e98" stroke-width="0.9"/>
<circle cx="606" cy="318" r="2.2" fill="none" stroke="#55557e" stroke-width="0.9"/>
<circle cx="652" cy="336" r="2" fill="none" stroke="#55557e" stroke-width="0.9"/>
<circle cx="660" cy="382" r="1.8" fill="none" stroke="#55557e" stroke-width="0.9"/>
<circle cx="598" cy="436" r="2" fill="none" stroke="#55557e" stroke-width="0.9"/>
<circle cx="612" cy="380" r="1.8" fill="none" stroke="#55557e" stroke-width="0.9"/>
<circle cx="633" cy="466" r="1.6" fill="none" stroke="#55557e" stroke-width="0.9"/>
<circle cx="656" cy="447" r="1.6" fill="none" stroke="#55557e" stroke-width="0.9"/>
<path d="M565,259 L580,259 Q602,266 619,285 L616,297 Q592,282 566,281Z" fill="#2b2c5b" />
<path d="M572,285 Q594,286 613,300" fill="none" stroke="#55557e" stroke-width="2.2" stroke-dasharray="5 3"/>
<path d="M570,268 Q596,271 616,289" fill="none" stroke="#4a4b85" stroke-width="2" stroke-dasharray="6 2"/>
<ellipse cx="601" cy="364" rx="10" ry="6" transform="rotate(-20 601 364)" fill="none" stroke="#2233dd" stroke-width="1.5"/>
<ellipse cx="644.5" cy="356.4" rx="6" ry="5" transform="rotate(0 644.5 356.4)" fill="none" stroke="#3a3ad0" stroke-width="1.4"/>
<ellipse cx="655.5" cy="369.4" rx="4" ry="3.5" transform="rotate(0 655.5 369.4)" fill="none" stroke="#55557e" stroke-width="1.3"/>
<path d="M598,394 Q596,406 606,408 L618,408" fill="none" stroke="#2233dd" stroke-width="1.6"/>
<ellipse cx="609" cy="426.5" rx="7.7" ry="4.3" transform="rotate(25 609 426.5)" fill="none" stroke="#2233dd" stroke-width="1.5"/>
<ellipse cx="625.4" cy="436.8" rx="4" ry="3.2" transform="rotate(0 625.4 436.8)" fill="none" stroke="#2233dd" stroke-width="1.2"/>
<path d="M629,445.5 L651,445.5" fill="none" stroke="#2233dd" stroke-width="2.6" stroke-linecap="round"/>
<circle cx="635" cy="384" r="1.4" fill="#2a3ad8"/>
<circle cx="632" cy="412" r="1.4" fill="#2a3ad8"/>
<circle cx="603" cy="444" r="1.4" fill="#2a3ad8"/>
<circle cx="650" cy="465" r="1.4" fill="#2a3ad8"/>
<circle cx="642" cy="352" r="1.4" fill="#2a3ad8"/>
<circle cx="606" cy="352" r="1.4" fill="#2a3ad8"/>
<circle cx="611" cy="400" r="1.4" fill="#2a3ad8"/>
<circle cx="611" cy="393" r="1.4" fill="#2a3ad8"/>
<rect x="565.0" y="236.0" width="15.3" height="23.0" fill="#2b2c5b" />
<rect x="566.3" y="237.3" width="12.7" height="20.2" fill="#34356a" />
<rect x="552.3" y="244.7" width="13.4" height="18.3" fill="#2b2c5b" />
<rect x="553.6" y="246.0" width="10.9" height="16.0" fill="#34356a" />
<rect x="597.0" y="241.2" width="15.0" height="25.1" fill="#2b2c5b" />
<rect x="598.3" y="242.5" width="12.4" height="22.5" fill="#34356a" />
<rect x="602.2" y="266.0" width="3.4" height="10.0" fill="#1f2045" />
<rect x="543.7" y="257.3" width="6.3" height="8.7" fill="#2b2c5b" />
<polygon points="537.0,262.5 545.0,262.5 552.0,262.0 566.0,262.0 580.0,259.0 581.0,266.0 570.0,270.0 567.0,280.0 566.0,317.0 570.0,340.0 571.0,362.0 571.0,420.0 566.0,431.0 566.0,449.5 558.0,471.0 529.8,471.0 529.8,430.0 520.0,432.0 520.0,346.0 522.5,305.7 522.5,296.6 527.0,296.0 531.0,278.0" fill="#2b2c5b" />
<rect x="486.0" y="296.6" width="36.5" height="9.1" fill="#2b2c5b" />
<rect x="488.6" y="305.7" width="31.4" height="40.3" fill="#34356a" />
<rect x="486.3" y="346.0" width="31.5" height="8.6" fill="#2b2c5b" />
<rect x="505.5" y="349.0" width="34.5" height="7.8" fill="#2b2c5b" />
<polygon points="508.6,356.8 539.4,356.8 537.0,388.4 508.6,388.4" fill="#34356a" />
<rect x="487.4" y="388.4" width="36.2" height="8.6" fill="#2b2c5b" />
<polygon points="490.5,397.0 522.0,397.0 520.0,432.0 490.5,432.0" fill="#34356a" />
<polygon points="487.8,432.0 528.8,430.0 528.8,471.0 511.3,471.0 487.8,447.6" fill="#2b2c5b" />
<rect x="510.3" y="470.0" width="18.5" height="19.6" fill="#6a6c95" />
<rect x="510.3" y="489.6" width="18.5" height="5.8" fill="#2b2c5b" />
<polygon points="537.5,263.0 544.6,263.0 543.0,307.0 529.0,348.0 525.7,348.0 535.0,307.0" fill="#1f2045" />
<polygon points="545.5,264.0 551.0,264.0 553.0,340.0 548.0,340.0" fill="#1f2045" />
<polygon points="560.0,262.0 566.0,262.0 566.0,440.0 560.0,440.0" fill="#1f2045" />
<rect x="539.4" y="370.0" width="6.3" height="100.0" fill="#1f2045" />
<polygon points="546.0,300.0 560.0,304.0 560.0,312.0 546.0,308.0" fill="#3e4078" />
<polygon points="546.0,330.0 566.0,338.0 566.0,346.0 546.0,338.0" fill="#1f2045" />
<polygon points="548.0,425.0 553.0,423.0 570.0,436.0 568.0,441.0 548.0,431.0" fill="#1f2045" />
<polygon points="529.8,430.0 529.8,512.0 569.8,512.0 570.8,488.6 558.0,471.0 566.0,449.5 566.0,430.0" fill="#2b2c5b" />
<polygon points="530.8,482.7 558.0,482.7 569.8,504.2 569.8,510.0 530.8,510.0" fill="#34356a" />
<polygon points="556.0,449.0 571.0,449.0 571.0,490.0 566.0,490.0 556.0,471.0" fill="#2b2c5b" />
<rect x="558.0" y="452.0" width="11.0" height="18.0" fill="#34356a" />
<polygon points="571.8,446.6 599.0,449.5 616.7,459.3 628.4,471.0 626.0,480.0 612.0,470.0 597.0,459.0 571.8,456.0" fill="#2b2c5b" />
<rect x="568.9" y="459.3" width="13.6" height="21.5" fill="#34356a" />
<rect x="570.8" y="480.8" width="4.9" height="54.7" fill="#1f2045" />
<polygon points="576.7,502.3 582.5,484.7 583.5,502.3" fill="#dfe1f2" />
<polygon points="584.5,467.0 601.0,467.0 601.0,449.5 614.8,449.5 614.8,512.0 584.5,512.0" fill="#2b2c5b" />
<rect x="602.0" y="451.0" width="11.8" height="22.0" fill="#34356a" />
<polygon points="587.0,480.0 606.0,480.0 612.0,497.0 612.0,510.0 587.0,510.0" fill="#34356a" />
<path d="M596,490 L604,490 M600,490 L600,499" fill="none" stroke="#15163a" stroke-width="1.3"/>
<rect x="557.0" y="516.0" width="28.5" height="21.4" fill="#34356a" />
<rect x="585.5" y="513.0" width="27.3" height="18.6" fill="#34356a" />
<rect x="571.0" y="516.0" width="5.0" height="21.4" fill="#1f2045" />
<polygon points="626.5,471.0 642.0,482.7 665.5,482.7 666.5,494.5 659.7,496.4 659.7,521.8 634.3,521.8 634.3,498.4 627.5,492.5" fill="#2b2c5b" />
<rect x="637.0" y="498.0" width="20.0" height="22.0" fill="#34356a" />
<path d="M643,506.5 L651,506.5 M647,506.5 L647,517" fill="none" stroke="#cdb894" stroke-width="1.3"/>
<rect x="613.3" y="329.0" width="15.1" height="16.3" fill="#ecebe6" />
<rect x="615.3" y="345.3" width="11.1" height="7.1" fill="#8f8a80" />
<rect x="615.3" y="352.4" width="11.1" height="20.0" fill="#dedbd3" />
<rect x="614.3" y="373.5" width="13.1" height="15.0" fill="#efeeea" />
<rect x="617.3" y="388.5" width="7.1" height="10.1" fill="#b9b3a6" />
<path d="M613.3,329V345.3M628.4,329V345.3M615.3,345V372.4M626.4,345V372.4M614.3,373.5V388.5M627.4,373.5V388.5M614.3,373.5H627.4M614.3,388.5H627.4M617.3,388.5V398M624.4,388.5V398" fill="none" stroke="#4b4640" stroke-width="1"/>
<polygon points="617.0,316.0 636.0,293.0 649.0,294.0 650.0,300.0 639.0,320.0 623.0,324.0" fill="#a9a9cf" />
<polygon points="634.0,293.0 649.0,293.0 649.0,299.0 636.0,298.0" fill="#c5a26b" />
<polygon points="636.0,297.5 647.5,298.0 647.5,306.0 641.0,306.0 638.0,303.0" fill="#2b2c5b" />
<path d="M626,312 L634,304 M629,316 L638,307" fill="none" stroke="#55557e" stroke-width="1.2"/>
<clipPath id="rb"><path d="M596.5,318.0 L600.0,310.0 L608.0,300.0 L620.4,290.0 L633.0,276.0 L642.4,266.0 L654.6,250.0 L665.4,245.0 L676.0,247.5 L684.7,234.0 L695.5,223.0 L707.3,221.0 L711.6,214.5 L719.2,212.0 L725.6,216.5 L726.0,229.5 L740.7,227.0 L762.2,223.5 L775.0,227.3 L783.8,238.0 L807.4,249.0 L824.6,271.7 L846.0,295.3 L861.2,323.3 L874.9,345.8 L885.2,371.7 L893.0,382.0 L913.6,384.6 L926.5,400.0 L929.1,419.4 L953.7,420.7 L953.7,478.8 L921.4,481.4 L921.4,487.9 L842.6,489.2 L838.7,464.6 L841.3,454.3 L834.9,441.4 L832.3,428.5 L838.7,415.6 L823.2,392.3 L819.4,371.7 L825.8,348.4 L822.4,327.6 L813.8,310.4 L796.6,284.6 L778.3,265.2 L777.0,270.0 L766.5,278.0 L753.6,280.0 L740.7,274.7 L723.5,278.0 L710.6,275.7 L693.0,283.0 L680.0,294.0 L668.0,303.0 L662.0,311.0 L650.0,326.0 L634.4,342.3 L628.4,340.3 L628.4,329.0 L613.3,329.0 L611.0,336.0 L606.0,343.0 L600.0,340.0 L596.0,330.0Z M618.4,314.2 L636.4,294.1 L647.5,295.1 L648.5,299.2 L638.4,318.2 L624.4,322.2Z M722.4,245.6 L727.8,239.0 L745.0,236.0 L738.5,243.4 L725.6,248.8Z" clip-rule="evenodd"/></clipPath>
<path d="M596.5,318.0 L600.0,310.0 L608.0,300.0 L620.4,290.0 L633.0,276.0 L642.4,266.0 L654.6,250.0 L665.4,245.0 L676.0,247.5 L684.7,234.0 L695.5,223.0 L707.3,221.0 L711.6,214.5 L719.2,212.0 L725.6,216.5 L726.0,229.5 L740.7,227.0 L762.2,223.5 L775.0,227.3 L783.8,238.0 L807.4,249.0 L824.6,271.7 L846.0,295.3 L861.2,323.3 L874.9,345.8 L885.2,371.7 L893.0,382.0 L913.6,384.6 L926.5,400.0 L929.1,419.4 L953.7,420.7 L953.7,478.8 L921.4,481.4 L921.4,487.9 L842.6,489.2 L838.7,464.6 L841.3,454.3 L834.9,441.4 L832.3,428.5 L838.7,415.6 L823.2,392.3 L819.4,371.7 L825.8,348.4 L822.4,327.6 L813.8,310.4 L796.6,284.6 L778.3,265.2 L777.0,270.0 L766.5,278.0 L753.6,280.0 L740.7,274.7 L723.5,278.0 L710.6,275.7 L693.0,283.0 L680.0,294.0 L668.0,303.0 L662.0,311.0 L650.0,326.0 L634.4,342.3 L628.4,340.3 L628.4,329.0 L613.3,329.0 L611.0,336.0 L606.0,343.0 L600.0,340.0 L596.0,330.0Z M618.4,314.2 L636.4,294.1 L647.5,295.1 L648.5,299.2 L638.4,318.2 L624.4,322.2Z M722.4,245.6 L727.8,239.0 L745.0,236.0 L738.5,243.4 L725.6,248.8Z" fill="#0d38d8" fill-rule="evenodd"/>
<g clip-path="url(#rb)">
<polygon points="606.0,336.0 634.0,338.0 662.0,308.0 693.0,281.0 700.0,279.0 664.0,316.0 640.0,342.0" fill="#0a2fc2" opacity="0.55"/>
<polygon points="606.0,302.0 633.0,272.0 655.0,252.0 666.0,248.0 640.0,276.0 612.0,306.0" fill="#1f4ff0" opacity="0.5"/>
<ellipse cx="757" cy="253" rx="24" ry="25" fill="#0b33cf" opacity="0.6"/>
<ellipse cx="755" cy="251" rx="15" ry="16" fill="#1546e8" opacity="0.6"/>
<ellipse cx="703" cy="246" rx="17" ry="20" fill="#0b33cf" opacity="0.5" transform="rotate(-35 703 246)"/>
<polygon points="790.0,262.0 800.0,262.0 840.0,312.0 856.0,345.0 848.0,345.0 828.0,310.0" fill="#1f4ff0" opacity="0.45"/>
<polygon points="783.0,268.0 796.0,285.0 814.0,311.0 826.0,340.0 832.0,340.0 818.0,304.0 798.0,276.0" fill="#0a2fc2" opacity="0.45"/>
<polygon points="826.0,352.0 858.0,346.0 866.0,372.0 850.0,392.0 830.0,388.0" fill="#1243e6" opacity="0.8"/>
<polygon points="834.0,358.0 852.0,355.0 856.0,372.0 838.0,378.0" fill="#2a58f2" opacity="0.55"/>
<polygon points="862.0,396.0 892.0,392.0 898.0,430.0 868.0,436.0" fill="#1a48ea" opacity="0.7"/>
<polygon points="878.0,394.0 892.0,392.0 898.0,430.0 884.0,433.0" fill="#0a2fc2" opacity="0.5"/>
<ellipse cx="881.4" cy="434" rx="48" ry="15.5" fill="none" stroke="#0a2cbc" stroke-width="2.2" opacity="0.7" transform="rotate(-3 881 434)"/>
<ellipse cx="881.4" cy="431" rx="42" ry="11" fill="#1242e4" opacity="0.5" transform="rotate(-3 881 431)"/>
<polygon points="842.0,458.0 921.0,455.0 921.4,487.9 842.6,489.2" fill="#1240ee" opacity="0.7"/>
<polygon points="921.0,440.0 953.7,438.0 953.7,478.8 921.4,481.4" fill="#0e3ae6" opacity="0.7"/>
<polygon points="930.0,446.0 950.0,445.0 950.0,462.0 930.0,463.0" fill="#2a58f2" opacity="0.4"/>
</g>
</svg>
</div>
</div>
<div class="abs" style="left:263.4px;top:129.0px;width:256.6px;height:11.0px;font-size:8px;line-height:11px;color:#333;white-space:nowrap">&lt;F8&gt; 或者&lt;Shift-roll&gt; 查找下一个有效的过滤器设置.</div>
<div class="abs" style="left:263.4px;top:138.6px;width:256.6px;height:11.0px;font-size:8px;line-height:11px;color:#333;white-space:nowrap">&lt;Shift +鼠标右键&gt; 显示选择过滤器.</div>
<svg class="abs" style="left:508.6px;top:128.0px" width="12" height="12" viewBox="0 0 12 12" ><path d="M4,1.5h6.5v9h-6.5" fill="none" stroke="#2f86c8" stroke-width="1.5"/><path d="M1,6h6" stroke="#d9342b" stroke-width="1.6"/><path d="M5.5,3.5l3,2.5l-3,2.5z" fill="#d9342b"/></svg>
<svg class="abs" style="left:525.0px;top:128.0px" width="12" height="12" viewBox="0 0 12 12" ><path d="M2,2v7l7,1.5" fill="none" stroke="#5aa83c" stroke-width="1.6"/><path d="M2,9l4,-4" stroke="#d9342b" stroke-width="1.2"/><circle cx="7" cy="4" r="2" fill="#f2b21d"/><circle cx="9" cy="8" r="1.6" fill="#7cc46a"/></svg>
<svg class="abs" style="left:538.3px;top:132.0px" width="5" height="5" viewBox="0 0 5 5" ><path d="M0.5,1.5h4l-2,2.5z" fill="#333"/></svg>
<svg class="abs" style="left:551.0px;top:128.0px" width="12" height="12" viewBox="0 0 12 12" ><path d="M2,10l7,-8l2,2l-7,7z" fill="#e5822c"/><path d="M2,10l1.5,-2l2,2z" fill="#d9342b"/><path d="M8,3l2,2" stroke="#f7d9a0" stroke-width="1"/></svg>
<svg class="abs" style="left:567.5px;top:128.0px" width="13" height="12" viewBox="0 0 13 12" ><path d="M1,5l5,-3l6,2l-5,3z" fill="#f2c21d"/><path d="M1,5v4l6,3v-5z" fill="#2f86c8"/><path d="M7,7v5l5,-4v-4z" fill="#3aa0d8"/></svg>
<svg class="abs" style="left:585.1px;top:128.0px" width="13" height="12" viewBox="0 0 13 12" ><path d="M1,4l5,-2.5l6,2l-5,3z" fill="#55b0e0"/><path d="M1,4v5l6,3v-5.5z" fill="#1f6aa8"/><path d="M7,6.5v5.5l5,-3.5v-5z" fill="#2f86c8"/></svg>
<svg class="abs" style="left:598.5px;top:132.0px" width="5" height="5" viewBox="0 0 5 5" ><path d="M0.5,1.5h4l-2,2.5z" fill="#333"/></svg>
<svg class="abs" style="left:609.3px;top:128.0px" width="13" height="12" viewBox="0 0 13 12" ><path d="M1,4l5,-2.5l6,2l-5,3zM1,4v5l6,3v-5.5M7,12l5,-3.5v-5" fill="#fdfdfd" stroke="#9aa0a8" stroke-width="0.9"/></svg>
<svg class="abs" style="left:624.2px;top:132.0px" width="5" height="5" viewBox="0 0 5 5" ><path d="M0.5,1.5h4l-2,2.5z" fill="#333"/></svg>
<svg class="abs" style="left:634.5px;top:128.0px" width="13" height="12" viewBox="0 0 13 12" ><path d="M1,4l5,-2.5l6,2l-5,3z" fill="#f2c21d"/><path d="M1,4v5l6,3v-5.5z" fill="#2f86c8"/><path d="M7,6.5v5.5l5,-3.5v-5z" fill="#e5822c"/></svg>
<svg class="abs" style="left:650.0px;top:132.0px" width="5" height="5" viewBox="0 0 5 5" ><path d="M0.5,1.5h4l-2,2.5z" fill="#333"/></svg>
<svg class="abs" style="left:661.3px;top:128.0px" width="12" height="12" viewBox="0 0 12 12" ><rect x="1" y="1" width="10" height="10" fill="#3b8fd0"/><circle cx="6" cy="6" r="3.6" fill="#f2d88a"/><circle cx="6" cy="6" r="1.8" fill="#c9ccd0"/></svg>
<svg class="abs" style="left:675.5px;top:132.0px" width="5" height="5" viewBox="0 0 5 5" ><path d="M0.5,1.5h4l-2,2.5z" fill="#333"/></svg>
<svg class="abs" style="left:686.7px;top:128.0px" width="12" height="12" viewBox="0 0 12 12" ><circle cx="6" cy="6" r="3.8" fill="none" stroke="#d9342b" stroke-width="1.3"/><path d="M6,0.5v11M0.5,6h11" stroke="#d9342b" stroke-width="1"/><circle cx="6" cy="6" r="1.4" fill="#3b8fd0"/></svg>
<svg class="abs" style="left:700.5px;top:132.0px" width="5" height="5" viewBox="0 0 5 5" ><path d="M0.5,1.5h4l-2,2.5z" fill="#333"/></svg>
<svg class="abs" style="left:712.0px;top:128.0px" width="12" height="12" viewBox="0 0 12 12" ><rect x="1" y="1" width="10" height="10" fill="#f4f7fa" stroke="#8aa0b4" stroke-width="0.9" stroke-dasharray="2 1"/><rect x="6.5" y="6.5" width="3" height="3" fill="#2f86c8"/><rect x="2.5" y="2.5" width="2" height="2" fill="#2f86c8"/></svg>
<svg class="abs" style="left:729.6px;top:127.5px" width="12" height="13" viewBox="0 0 12 13" ><path d="M2.5,1v11M9.5,1v11" stroke="#2f6fc8" stroke-width="1.6"/><path d="M2.5,7.5h7" stroke="#d9342b" stroke-width="1.4"/><path d="M2.5,2.5h7" stroke="#7aa8d8" stroke-width="0.8"/></svg>
<svg class="abs" style="left:743.5px;top:132.0px" width="5" height="5" viewBox="0 0 5 5" ><path d="M0.5,1.5h4l-2,2.5z" fill="#333"/></svg>
<svg class="abs" style="left:755.0px;top:128.0px" width="12" height="12" viewBox="0 0 12 12" ><rect x="0.8" y="1" width="10.4" height="9" fill="#7a8088"/><rect x="2" y="2.2" width="8" height="3" fill="#b8bec6"/><path d="M2,10l1.5,1.5h5l1.5,-1.5" fill="#5a6068"/></svg>
<svg class="abs" style="left:769.1px;top:132.0px" width="5" height="5" viewBox="0 0 5 5" ><path d="M0.5,1.5h4l-2,2.5z" fill="#333"/></svg>
<div class="abs" style="left:780.5px;top:130.6px;width:11.8px;height:5.6px;background:#0a0a0a"></div>
<div class="abs" style="left:796.5px;top:127.6px;width:13.5px;height:13.0px;background:#bcd4ea;border:1.6px solid #2f6fb8"></div>
<svg class="abs" style="left:800.7px;top:131.5px" width="5" height="5" viewBox="0 0 5 5" ><circle cx="2.5" cy="2.5" r="1.2" fill="#5a8ac0"/></svg>
<svg class="abs" style="left:813.9px;top:128.0px" width="13" height="12" viewBox="0 0 13 12" ><path d="M1,4l5,-2.5l6,2l-5,3z" fill="#6ac0e8"/><path d="M1,4v5l6,3v-5.5z" fill="#2f86c8"/><path d="M7,6.5v5.5l5,-3.5v-5z" fill="#4aa3d8"/><path d="M3,5.5l2,1M3,7.5l2,1M9,6l1.5,-1M9,8l1.5,-1" stroke="#e8f3fa" stroke-width="0.7"/></svg>
<svg class="abs" style="left:828.8px;top:132.0px" width="5" height="5" viewBox="0 0 5 5" ><path d="M0.5,1.5h4l-2,2.5z" fill="#333"/></svg>
<div class="abs" style="left:838.3px;top:125.4px;width:78.9px;height:15.0px;background:#e9e9e9;border:1px solid #dcdcdc;font-size:8.4px;line-height:14px;color:#8a8a8a;padding-left:26.5px;white-space:nowrap">图层0000</div>
<svg class="abs" style="left:842.0px;top:127.5px" width="8" height="11" viewBox="0 0 8 11" ><path d="M4,0.8a3,3 0 0 1 1.6,5.6v1.6h-3.2v-1.6a3,3 0 0 1 1.6,-5.6z" fill="#f4f4f4" stroke="#a8a8a8" stroke-width="0.8"/><path d="M2.6,9.2h2.8" stroke="#a8a8a8" stroke-width="0.9"/></svg>
<svg class="abs" style="left:853.0px;top:128.0px" width="10" height="10" viewBox="0 0 10 10" ><circle cx="5" cy="5" r="4" fill="#dedede" stroke="#a8a8a8" stroke-width="1"/></svg>
<svg class="abs" style="left:908.1px;top:129.5px" width="5" height="5" viewBox="0 0 5 5" ><path d="M0.5,1.5h4l-2,2.5z" fill="#aaa"/></svg>
<svg class="abs" style="left:300px;top:552px" width="84" height="66" viewBox="300 552 84 66"><path d="M314,605.5L314,572" stroke="#1a3af0" stroke-width="1.7"/><path d="M310.6,575l3.4,-9.5l3.4,9.5z" fill="#1a3af0"/><ellipse cx="313.5" cy="579" rx="1.6" ry="2.8" fill="#4a3a7a"/><path d="M314,605.5L352,604.5" stroke="#e0343a" stroke-width="1.7"/><path d="M352,601.3l9.5,3l-9.5,3.4z" fill="#e0343a"/><path d="M355,601.8l2.5,2.7l-2.5,3" fill="none" stroke="#a82028" stroke-width="0.8"/><text x="306.8" y="565.5" font-family="Liberation Sans" font-size="11.5" fill="#2a4af0">Z</text><text x="366.3" y="610.5" font-family="Liberation Sans" font-size="11.5" fill="#e0343a">X</text><path d="M311,566.3l2,1.2M317,566.3l-2,1.2" stroke="#3fa33a" stroke-width="0.8"/></svg>
<div class="abs" style="left:251.5px;top:665.5px;width:83.5px;height:14.5px;font-size:12.4px;line-height:14px;color:#2a2a40;white-space:nowrap">2558.57mm</div>
<svg class="abs" style="left:842px;top:517px" width="12" height="18" viewBox="0 0 12 18"><path d="M1,1v12.5l3,-2.8l2.2,5l2,-.9l-2.2,-4.8h4z" fill="#fff" stroke="#222" stroke-width="1"/></svg>
<div class="abs" style="left:961.0px;top:683.0px;width:1.0px;height:11.0px;background:#cfcfcf"></div>
<div class="abs" style="left:1013.0px;top:684.5px;width:11.0px;height:9.5px;background:#f3d37a;border:1px solid #d9b24a"></div>
<div class="abs" style="left:1016.0px;top:687.0px;width:8.0px;height:7.0px;background:#4a7fc0;opacity:.8"></div>
<div class="abs" id="status">&lt;单击中键&gt;结束.</div>
<div class="abs" id="bluebar"></div>
</body>
</html>
